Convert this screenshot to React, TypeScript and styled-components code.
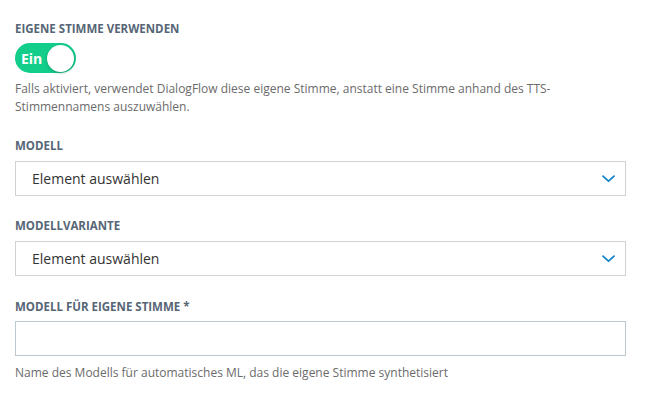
import React from "react";
import styled, { createGlobalStyle } from "styled-components";

const Global = createGlobalStyle`
  html, body { margin: 0; padding: 0; background: #ffffff; }
  body { font-family: "Open Sans", "Noto Sans", sans-serif; }
  * { box-sizing: border-box; }
`;

const Page = styled.div`
  padding: 21px 26px 0 15px;
  display: flex;
  flex-direction: column;
`;

const Field = styled.div<{ $gap?: number }>`
  display: flex;
  flex-direction: column;
  margin-bottom: ${(p) => p.$gap ?? 22}px;
`;

const Label = styled.div<{ $space?: number }>`
  font-size: 11.5px;
  line-height: 16px;
  font-weight: 700;
  color: #566676;
  text-transform: uppercase;
  margin-bottom: ${(p) => p.$space ?? 7}px;
`;

const Toggle = styled.div<{ $on: boolean }>`
  width: 61px;
  height: 30px;
  border-radius: 15px;
  background: ${(p) => (p.$on ? "#13cd8b" : "#c8ced3")};
  display: flex;
  align-items: center;
  justify-content: space-between;
  padding: 0 2px 0 6px;
  margin-top: -1px;
  margin-bottom: 7px;
`;

const ToggleText = styled.span`
  font-size: 14px;
  font-weight: 700;
  color: #ffffff;
`;

const Knob = styled.span`
  width: 27px;
  height: 27px;
  border-radius: 50%;
  background: #ffffff;
  box-shadow: 0 1px 3px rgba(0, 0, 0, 0.25);
`;

const Hint = styled.div`
  font-size: 12px;
  line-height: 18px;
  color: #6b6b6b;
`;

const SelectBox = styled.div`
  height: 35px;
  border: 1px solid #d2d2d2;
  background: #fff;
  display: flex;
  align-items: center;
  justify-content: space-between;
  padding: 0 10px 0 16px;
`;

const SelectText = styled.span`
  font-size: 14px;
  color: #333333;
`;

const Input = styled.div`
  height: 35px;
  border: 1px solid #bcc7ce;
  background: #fff;
  margin-bottom: 8px;
`;

const Chevron = () => (
  <svg width="13" height="8" viewBox="0 0 13 8" fill="none">
    <path d="M1 1.2 L6.5 6.2 L12 1.2" stroke="#1486c8" strokeWidth="1.8" strokeLinecap="round" strokeLinejoin="round" />
  </svg>
);

const Select = ({ text }: { text: string }) => (
  <SelectBox>
    <SelectText>{text}</SelectText>
    <Chevron />
  </SelectBox>
);

export default function App() {
  return (
    <>
      <Global />
      <Page>
        <Field>
          <Label>Eigene Stimme verwenden</Label>
          <Toggle $on>
            <ToggleText>Ein</ToggleText>
            <Knob />
          </Toggle>
          <Hint>
            Falls aktiviert, verwendet DialogFlow diese eigene Stimme, anstatt eine Stimme anhand des TTS-
            <br />
            Stimmennamens auszuwählen.
          </Hint>
        </Field>
        <Field>
          <Label>Modell</Label>
          <Select text="Element auswählen" />
        </Field>
        <Field $gap={23}>
          <Label>Modellvariante</Label>
          <Select text="Element auswählen" />
        </Field>
        <Field $gap={0}>
          <Label $space={6}>Modell für eigene Stimme *</Label>
          <Input />
          <Hint>Name des Modells für automatisches ML, das die eigene Stimme synthetisiert</Hint>
        </Field>
      </Page>
    </>
  );
}
